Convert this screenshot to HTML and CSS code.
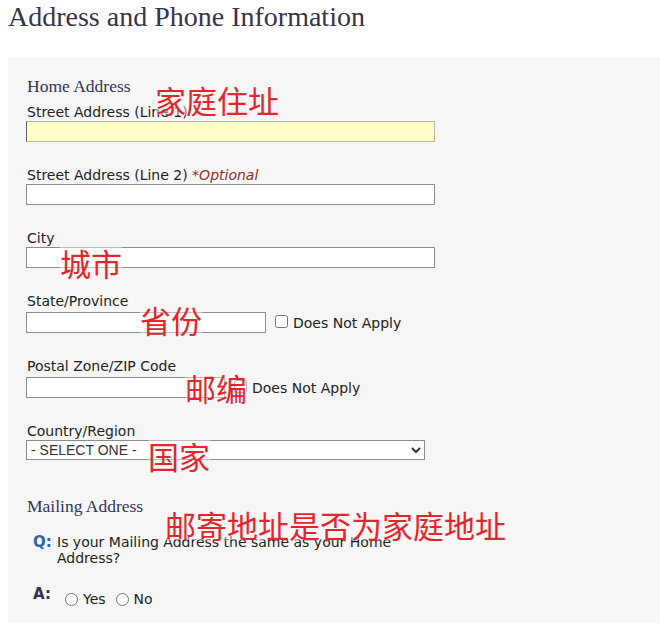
FILE: index.html
```html
<!DOCTYPE html>
<html lang="en">
<head>
    <meta charset="UTF-8">
    <title>Address and Phone Information</title>
    <link rel="stylesheet" href="styles.css">
</head>
<body>
    <h1 class="page-title">Address and Phone Information</h1>
    <div class="panel">
        <h3 class="section-title">Home Address</h3>

        <div class="field">
            <label for="street1">Street Address (Line 1)</label>
            <input type="text" id="street1" class="text-input wide focus">
        </div>

        <div class="field">
            <label for="street2">Street Address (Line 2) <em class="optional">*Optional</em></label>
            <input type="text" id="street2" class="text-input wide">
        </div>

        <div class="field">
            <label for="city">City</label>
            <input type="text" id="city" class="text-input wide">
        </div>

        <div class="field">
            <label for="state">State/Province</label>
            <div class="field-row">
                <input type="text" id="state" class="text-input state">
                <label class="check"><input type="checkbox"> Does Not Apply</label>
            </div>
        </div>

        <div class="field">
            <label for="zip">Postal Zone/ZIP Code</label>
            <div class="field-row">
                <input type="text" id="zip" class="text-input zip">
                <label class="check"><input type="checkbox"> Does Not Apply</label>
            </div>
        </div>

        <div class="field">
            <label for="country">Country/Region</label>
            <select id="country" class="select-input">
                <option>- SELECT ONE -</option>
            </select>
        </div>

        <h3 class="section-title mailing">Mailing Address</h3>
        <div class="qa">
            <span class="q">Q:</span>
            <span class="qa-text">Is your Mailing Address the same as your Home Address?</span>
            <span class="a">A:</span>
            <span class="answers">
                <label class="radio"><input type="radio" name="same"> Yes</label>
                <label class="radio"><input type="radio" name="same"> No</label>
            </span>
        </div>

        <!-- annotations -->
        <span class="note n1">家庭住址</span>
        <span class="note n2">城市</span>
        <span class="note n3">省份</span>
        <span class="note n4">邮编</span>
        <span class="note n5">国家</span>
        <span class="note n6">邮寄地址是否为家庭地址</span>
    </div>
</body>
</html>
```

FILE: styles.css
```css
body {
    margin: 0 0 0 8px;
    background: #fff;
    font-family: 'DejaVu Sans', Verdana, sans-serif;
    color: #222;
}
.page-title {
    font-family: 'Liberation Serif', 'Times New Roman', serif;
    font-weight: normal;
    font-size: 28px;
    line-height: 32px;
    color: #34344e;
    margin: 1px 0 0 0;
    padding: 0;
}
.panel {
    position: relative;
    margin-top: 24px;
    background: #f6f6f6;
    padding: 19px 18px 20px 18px;
}
.section-title {
    font-family: 'Liberation Serif', 'Times New Roman', serif;
    font-weight: normal;
    font-size: 17.5px;
    line-height: 20px;
    color: #33335a;
    margin: 0 0 8px 1px;
}
.field {
    margin-bottom: 25px;
}
.field > label {
    display: block;
    font-size: 14px;
    line-height: 17px;
    margin: 0 0 0 1px;
    color: #222;
}
.optional {
    color: #9a2b2b;
}
.text-input {
    box-sizing: border-box;
    height: 21px;
    border: 1px solid #8c8c8c;
    background: #fff;
    margin: 0;
    padding: 0 3px;
    display: block;
}
.text-input.wide {
    width: 409px;
}
.text-input.focus {
    background: #fdfdc6;
    border-color: #b8b8a0;
    border-left-color: #666;
}
.text-input.state {
    width: 240px;
}
.text-input.zip {
    width: 199px;
}
.field-row {
    display: flex;
    align-items: center;
    margin-top: 2px;
}
.check {
    display: flex;
    align-items: center;
    font-size: 14px;
    margin-left: 9px;
    color: #222;
}
.check input {
    margin: 0 5px 2px 0;
    width: 13px;
    height: 13px;
}
.select-input {
    box-sizing: border-box;
    width: 399px;
    height: 20px;
    border: 1px solid #8c8c8c;
    border-radius: 0;
    background: #fff;
    font-family: 'Liberation Sans', Arial, sans-serif;
    font-size: 14px;
    color: #333;
    padding: 0;
    display: block;
}
.section-title.mailing {
    margin-top: 36px;
    margin-bottom: 18px;
}
.qa {
    display: grid;
    grid-template-columns: 24px 380px;
    row-gap: 20px;
    padding-left: 7px;
    font-size: 14px;
    line-height: 16px;
}
.q {
    color: #2f64a8;
    font-weight: bold;
    font-size: 15px;
}
.a {
    color: #2e3350;
    font-weight: bold;
    font-size: 15px;
}
.answers {
    display: flex;
    align-items: center;
    gap: 10px;
    padding-top: 5px;
    margin-left: 8px;
}
.radio {
    display: flex;
    align-items: center;
}
.radio input {
    margin: 0 5px 0 0;
    width: 13px;
    height: 13px;
}
.note {
    position: absolute;
    font-family: 'Noto Sans CJK SC', sans-serif;
    font-size: 31px;
    line-height: 1;
    color: #e3262b;
    background: rgba(246, 246, 246, 0.45);
    white-space: nowrap;
}
.n1 { left: 147px; top: 27px; }
.n2 { left: 52px; top: 190px; }
.n3 { left: 132px; top: 247px; }
.n4 { left: 177px; top: 315px; }
.n5 { left: 140px; top: 383px; }
.n6 { left: 157px; top: 452px; }
```
